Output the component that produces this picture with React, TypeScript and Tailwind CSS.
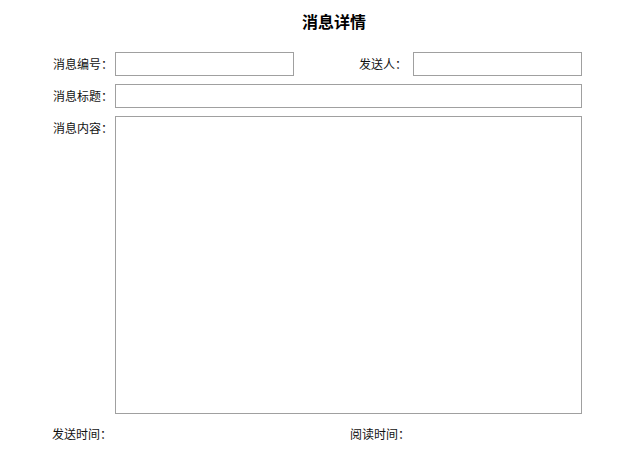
export default function App() {
  const box = "border border-[#a0a0a0] bg-white";

  return (
    <div className="w-[635px] h-[465px] bg-white text-[12px] text-[#111] font-['Liberation_Sans','Noto_Sans_CJK_SC',sans-serif] overflow-hidden">
      {/* Title */}
      <div className="pt-[12px] pl-[33px] text-center">
        <h1 className="text-[16px] font-bold leading-[22px] text-black">消息详情</h1>
      </div>

      <div className="pl-[52px] pt-[18px] flex flex-col gap-[8px]">
        {/* Row 1 */}
        <div className="flex items-center h-[24px]">
          <span className="w-[61px] text-right whitespace-nowrap pt-[2px]">消息编号：</span>
          <div className={`ml-[2px] w-[179px] h-[24px] ${box}`} />
          <span className="w-[113px] text-right whitespace-nowrap pt-[2px]">发送人：</span>
          <div className={`ml-[6px] w-[169px] h-[24px] ${box}`} />
        </div>

        {/* Row 2 */}
        <div className="flex items-center h-[24px]">
          <span className="w-[61px] text-right whitespace-nowrap pt-[2px]">消息标题：</span>
          <div className={`ml-[2px] w-[467px] h-[24px] ${box}`} />
        </div>

        {/* Row 3 */}
        <div className="flex items-start">
          <span className="w-[61px] text-right whitespace-nowrap pt-[4px]">消息内容：</span>
          <div className={`ml-[2px] w-[467px] h-[298px] ${box}`} />
        </div>

        {/* Row 4 */}
        <div className="flex items-center h-[24px] mt-[1px]">
          <span className="w-[298px] whitespace-nowrap">发送时间：</span>
          <span className="whitespace-nowrap">阅读时间：</span>
        </div>
      </div>
    </div>
  );
}
